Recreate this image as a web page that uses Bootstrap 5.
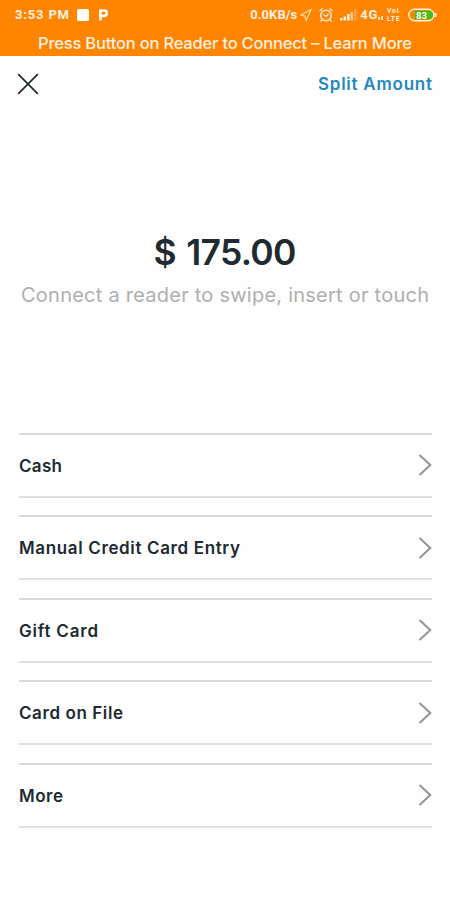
<!DOCTYPE html>
<html lang="en">
<head>
<meta charset="utf-8">
<meta name="viewport" content="width=device-width, initial-scale=1">
<title>Checkout</title>
<link href="https://cdn.jsdelivr.net/npm/bootstrap@5.3.0/dist/css/bootstrap.min.css" rel="stylesheet">
<style>
body{font-family:Inter,sans-serif;color:#202a31;background:#fefefe;height:900px;overflow:hidden}
.top-area{background:#ff8400;height:55.5px;color:#fff0e2}
.status-line{height:29px;padding:0 13px 0 15px;font:700 13px/29px Roboto,sans-serif;white-space:nowrap}
.status-line svg,.close-btn svg,.pay-row svg{display:block;flex:none}
.sq-icon{margin-left:7px}
.p-icon{margin-left:9px}
.gap-s{margin-left:3px}
.gap-m{margin-left:6px}
.volte{width:15px;margin-left:3px;font-size:6.8px;line-height:8px;color:#fff0e2;letter-spacing:.8px}
.volte span{display:block}
.reader-note{font:500 16.5px/28px Inter,sans-serif;white-space:nowrap}
.head-line{height:57px;padding:0 18px 0 17px}
.close-btn{width:22px;height:22px}
.split-link{color:#2389be;font:600 17px/26px Inter,sans-serif;white-space:nowrap}
.amount-area{height:320px;padding-top:119px}
.amount{font:600 35.5px/42px Inter,sans-serif;word-spacing:2px;white-space:nowrap}
.hint{color:#adb0b0;font:400 20px/28px Inter,sans-serif;margin-top:7px;white-space:nowrap}
.pay-list{gap:17.6px;padding:0 18px 0 19px}
.pay-row{height:65px;border-top:2px solid #d9dbdb;border-bottom:2px solid #dfe1e1;color:inherit;font:600 17px/24px Inter,sans-serif}
.pay-row .fit{padding-top:1px}
.fit{display:inline-block;white-space:nowrap}
</style>
<script src="https://cdn.jsdelivr.net/npm/bootstrap@5.3.0/dist/js/bootstrap.bundle.min.js"></script>
</head>
<body>
<header class="top-area">
  <div class="status-line d-flex align-items-center">
    <span class="fit" data-w="54">3:53 PM</span>
    <svg class="sq-icon" width="12" height="12" viewBox="0 0 12 12"><rect width="12" height="12" rx="1.500" fill="#fff"/></svg>
    <svg class="p-icon" width="11" height="13" viewBox="0 0 11 13"><path d="M2.400 12.500V2.500H6a2.700 2.700 0 0 1 0 5.400H2.400" fill="none" stroke="#fff" stroke-width="2.600" stroke-linejoin="round"/></svg>
    <span class="ms-auto fit" data-w="47">0.0KB/s</span>
    <svg class="gap-s" width="12" height="14" viewBox="0 0 12 14"><path d="M11 1.500L1 7l4 1.200L6.200 12.500z" fill="none" stroke="#ffd9ad" stroke-width="1.200"/></svg>
    <svg class="gap-m" width="16" height="16" viewBox="0 0 16 16" fill="none" stroke="#ffe7cf" stroke-width="1.500"><circle cx="8" cy="8.500" r="5.300"/><path d="M1.500 4L4.500 1.500M14.500 4L11.500 1.500M4 13L2.500 14.500M12 13l1.500 1.500M5.500 7.500L8 9.500l2.500-2.500"/></svg>
    <svg class="gap-m" width="17" height="12" viewBox="0 0 17 12"><path d="M0 9h2.500v2.500H0zM3.500 7.500H6v4H3.500zM7 5h2.500v6.500H7z" fill="#fff0df"/><path d="M10.500 3H13v8.500h-2.500z" fill="#ffc88c"/><path d="M14 0h2.500v11.500H14z" fill="#ffa040"/></svg>
    <span class="fit gap-s" data-w="17">4G</span>
    <svg width="6" height="12" viewBox="0 0 6 12"><path d="M0 8h2v3H0zM3 7h2v4H3z" fill="#ffd9b0"/></svg>
    <span class="volte"><span>VoI</span><span>LTE</span></span>
    <svg class="gap-m" width="29" height="14" viewBox="0 0 29 14"><rect x=".8" y="1.300" width="25" height="11.400" rx="5.700" fill="#ff8400" stroke="#fff0e0" stroke-width="1.400"/><path d="M7 2.800h14a4.200 4.200 0 0 1 0 8.400H7z" fill="#45bd16"/><path d="M27.500 5v4" stroke="#fff0e0" stroke-width="2"/><text x="8" y="10.500" font-family="Roboto" font-size="9.500" font-weight="700" fill="#fff" textLength="11">83</text></svg>
  </div>
  <div class="reader-note text-center"><span class="fit" data-w="374">Press Button on Reader to Connect – Learn More</span></div>
</header>
<main>
  <div class="head-line d-flex align-items-center justify-content-between">
    <button class="close-btn btn p-0 border-0" type="button" aria-label="Close"><svg width="22" height="22" viewBox="0 0 22 22"><path d="M1.200 1.200l19.600 19.600M20.800 1.200L1.200 20.800" stroke="#22292d" stroke-width="1.700"/></svg></button>
    <a class="split-link text-decoration-none" href="#"><span class="fit" data-w="114">Split Amount</span></a>
  </div>
  <section class="amount-area text-center">
    <div class="amount"><span class="fit" data-w="143">$ 175.00</span></div>
    <div class="hint"><span class="fit" data-w="408">Connect a reader to swipe, insert or touch</span></div>
  </section>
  <nav class="pay-list d-flex flex-column" aria-label="Payment methods">
    <a href="#" class="pay-row d-flex align-items-center justify-content-between text-decoration-none"><span class="fit" data-w="43">Cash</span><svg width="14" height="22" viewBox="0 0 14 22"><path d="M1.500 1L12.300 11 1.500 21" fill="none" stroke="#8f9698" stroke-width="2"/></svg></a>
    <a href="#" class="pay-row d-flex align-items-center justify-content-between text-decoration-none"><span class="fit" data-w="221">Manual Credit Card Entry</span><svg width="14" height="22" viewBox="0 0 14 22"><path d="M1.500 1L12.300 11 1.500 21" fill="none" stroke="#8f9698" stroke-width="2"/></svg></a>
    <a href="#" class="pay-row d-flex align-items-center justify-content-between text-decoration-none"><span class="fit" data-w="79">Gift Card</span><svg width="14" height="22" viewBox="0 0 14 22"><path d="M1.500 1L12.300 11 1.500 21" fill="none" stroke="#8f9698" stroke-width="2"/></svg></a>
    <a href="#" class="pay-row d-flex align-items-center justify-content-between text-decoration-none"><span class="fit" data-w="104">Card on File</span><svg width="14" height="22" viewBox="0 0 14 22"><path d="M1.500 1L12.300 11 1.500 21" fill="none" stroke="#8f9698" stroke-width="2"/></svg></a>
    <a href="#" class="pay-row d-flex align-items-center justify-content-between text-decoration-none"><span class="fit" data-w="44">More</span><svg width="14" height="22" viewBox="0 0 14 22"><path d="M1.500 1L12.300 11 1.500 21" fill="none" stroke="#8f9698" stroke-width="2"/></svg></a>
  </nav>
</main>
<script>
// Track each label so that it fills its intended width.
document.querySelectorAll('.fit').forEach(function(el){
  var target=parseFloat(el.dataset.w),n=el.textContent.length;
  var gap=(target-el.getBoundingClientRect().width)/(n-1);
  el.style.letterSpacing=gap+'px';
  if(!el.closest('.status-line')) el.style.marginRight=-gap+'px';
});
</script>
</body>
</html>
